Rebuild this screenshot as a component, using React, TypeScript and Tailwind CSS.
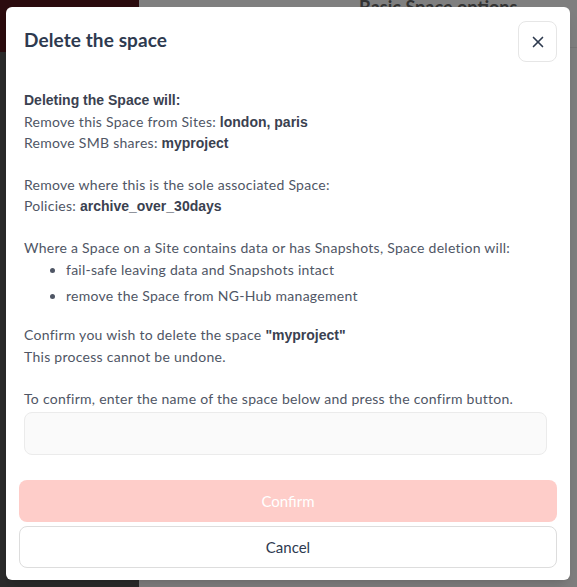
import React from 'react';
import { X } from 'lucide-react';

const body = { fontFamily: 'Lato, "Open Sans", sans-serif' };
const boldFont = 'font-bold tracking-normal text-[#3a4150] [font-family:"Liberation_Sans",Arial,sans-serif]';
const strong = `${boldFont} leading-none`;

export default function App() {
  const [name, setName] = React.useState('');

  return (
    <div className="relative h-[587px] w-[577px] overflow-hidden bg-[#7f7f7f]" style={body}>
      {/* page behind the overlay */}
      <div className="flex h-full">
        <div className="flex w-[139px] flex-col">
          <div className="h-[52px] bg-[#2b0b0e]" />
          <div className="flex-1 bg-[#2b2b2b]" />
        </div>
        <div className="flex-1 bg-[#7f7f7f]">
          <div className="flex h-[48px] items-start border-b border-[#767676] pl-[220px]">
            <span className="mt-[-6px] text-[18px] font-bold text-[#333]">Basic Space options</span>
          </div>
        </div>
      </div>

      {/* dialog */}
      <div className="absolute left-[6px] top-[7px] flex h-[573px] w-[564px] flex-col rounded-md bg-white px-[13px] pb-[12px] pt-[14px] shadow-lg">
        <div className="flex items-start justify-between pl-[5px]">
          <h2 className="pt-[5px] text-[19px] font-bold tracking-[0.1px] text-[#2e3a4f]">Delete the space</h2>
          <button className="flex h-[41px] w-[39px] items-center justify-center rounded-lg border border-[#e6e6e6] text-[#2e3a4f]">
            <X className="h-[18px] w-[18px]" strokeWidth={2.2} />
          </button>
        </div>

        <div className="mt-[28px] px-[5px] text-[14px] leading-[21px] tracking-[0.27px] text-[#4f5665]">
          <p className={boldFont}>Deleting the Space will:</p>
          <p>
            Remove this Space from Sites: <span className={strong}>london, paris</span>
          </p>
          <p>
            Remove SMB shares: <span className={strong}>myproject</span>
          </p>

          <p className="mt-[21px]">Remove where this is the sole associated Space:</p>
          <p>
            Policies: <span className={strong}>archive_over_30days</span>
          </p>

          <p className="mt-[21px]">Where a Space on a Site contains data or has Snapshots, Space deletion will:</p>
          <ul className="mt-[-1px] list-disc pl-[42px] leading-[26px]">
            <li>fail-safe leaving data and Snapshots intact</li>
            <li>remove the Space from NG-Hub management</li>
          </ul>

          <p className="mt-[15px] leading-[22px]">
            Confirm you wish to delete the space <span className={strong}>"myproject"</span>
          </p>
          <p className="leading-[22px]">This process cannot be undone.</p>

          <p className="mt-[20px]">To confirm, enter the name of the space below and press the confirm button.</p>
          <input
            value={name}
            onChange={(e) => setName(e.target.value)}
            className="mt-[3px] h-[43px] w-[523px] rounded-lg border border-[#ebebeb] bg-[#fafafa] px-3 outline-none"
          />
        </div>

        <div className="mt-auto flex flex-col gap-[4px]">
          <button
            disabled={name !== 'myproject'}
            className="h-[42px] w-full rounded-lg bg-[#fecdc9] text-[15px] text-white"
          >
            Confirm
          </button>
          <button className="h-[42px] w-full rounded-lg border border-[#dddddd] bg-white text-[15px] text-[#2e3a4f]">
            Cancel
          </button>
        </div>
      </div>
    </div>
  );
}
